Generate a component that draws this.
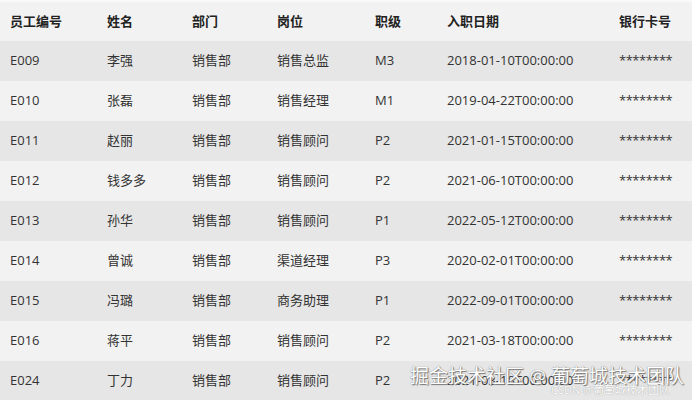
import React from "react";

const rows = [
  ["E009", "李强", "销售部", "销售总监", "M3", "2018-01-10T00:00:00"],
  ["E010", "张磊", "销售部", "销售经理", "M1", "2019-04-22T00:00:00"],
  ["E011", "赵丽", "销售部", "销售顾问", "P2", "2021-01-15T00:00:00"],
  ["E012", "钱多多", "销售部", "销售顾问", "P2", "2021-06-10T00:00:00"],
  ["E013", "孙华", "销售部", "销售顾问", "P1", "2022-05-12T00:00:00"],
  ["E014", "曾诚", "销售部", "渠道经理", "P3", "2020-02-01T00:00:00"],
  ["E015", "冯璐", "销售部", "商务助理", "P1", "2022-09-01T00:00:00"],
  ["E016", "蒋平", "销售部", "销售顾问", "P2", "2021-03-18T00:00:00"],
  ["E024", "丁力", "销售部", "销售顾问", "P2", "2021-03-18T00:00:00"],
];

const cols = "grid grid-cols-[97px_85px_85px_98px_72px_172px_1fr] items-center";

export default function App() {
  return (
    <div
      className="relative w-[692px] h-[400px] overflow-hidden bg-[#f2f2f2] text-[13px] text-[#333]"
      style={{ fontFamily: '"Open Sans", "Noto Sans CJK SC", sans-serif' }}
    >
      <div className="h-[2px] bg-[#f9f9f9]" />
      <div className={`${cols} h-[39px] bg-[#f2f2f2] font-bold text-[#222]`}>
        <div className="pl-[10px]">员工编号</div>
        <div className="pl-[10px]">姓名</div>
        <div className="pl-[10px]">部门</div>
        <div className="pl-[10px]">岗位</div>
        <div className="pl-[10px]">职级</div>
        <div className="pl-[10px]">入职日期</div>
        <div className="pl-[10px]">银行卡号</div>
      </div>
      {rows.map((r, i) => (
        <div
          key={r[0]}
          className={`${cols} h-[40px] ${i % 2 === 0 ? "bg-[#e6e6e6]" : "bg-[#f2f2f2]"}`}
        >
          {r.map((c, j) => (
            <div key={j} className="pl-[10px] whitespace-nowrap">
              {c}
            </div>
          ))}
          <div className="pl-[10px] tracking-[-0.5px]">********</div>
        </div>
      ))}
      <div
        className="absolute left-[410px] top-[364px] text-[19px] leading-[24px] text-white whitespace-nowrap"
        style={{ textShadow: "0 0 1px #666, 1px 1px 1px #777" }}
      >
        掘金技术社区 @ 葡萄城技术团队
      </div>
      <div
        className="absolute left-[551px] top-[383px] text-[11px] leading-[14px] text-white whitespace-nowrap"
        style={{ textShadow: "0 0 1px #888" }}
      >
        CSDN @葡萄城技术团队
      </div>
    </div>
  );
}
